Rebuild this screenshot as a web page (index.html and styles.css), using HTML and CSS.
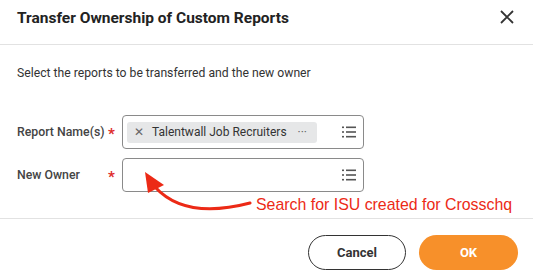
FILE: index.html
```html
<!DOCTYPE html>
<html lang="en">
<head>
    <meta charset="UTF-8">
    <title>Transfer Ownership of Custom Reports</title>
    <link rel="stylesheet" href="styles.css">
</head>
<body>
<div class="dialog">
    <div class="header">
        <h2>Transfer Ownership of Custom Reports</h2>
        <svg class="close" width="14" height="14" viewBox="0 0 14 14">
            <path d="M1 1 L13 13 M13 1 L1 13" stroke="#333" stroke-width="1.8" fill="none"/>
        </svg>
    </div>

    <div class="content">
        <p class="intro">Select the reports to be transferred and the new owner</p>

        <div class="row">
            <label class="lbl">Report Name(s)</label>
            <span class="req">*</span>
            <div class="field">
                <span class="chip">
                    <span class="chip-x">&#x2715;</span>
                    <span class="chip-text">Talentwall Job Recruiters</span>
                    <span class="chip-more">&middot;&middot;&middot;</span>
                </span>
                <svg class="list" width="14" height="12" viewBox="0 0 14 12">
                    <rect x="0" y="0.5" width="2" height="1.6" fill="#555"/>
                    <rect x="4" y="0.5" width="10" height="1.6" fill="#555"/>
                    <rect x="0" y="5.2" width="2" height="1.6" fill="#555"/>
                    <rect x="4" y="5.2" width="10" height="1.6" fill="#555"/>
                    <rect x="0" y="9.9" width="2" height="1.6" fill="#555"/>
                    <rect x="4" y="9.9" width="10" height="1.6" fill="#555"/>
                </svg>
            </div>
        </div>

        <div class="row">
            <label class="lbl">New Owner</label>
            <span class="req">*</span>
            <div class="field">
                <span class="spacer"></span>
                <svg class="list" width="14" height="12" viewBox="0 0 14 12">
                    <rect x="0" y="0.5" width="2" height="1.6" fill="#555"/>
                    <rect x="4" y="0.5" width="10" height="1.6" fill="#555"/>
                    <rect x="0" y="5.2" width="2" height="1.6" fill="#555"/>
                    <rect x="4" y="5.2" width="10" height="1.6" fill="#555"/>
                    <rect x="0" y="9.9" width="2" height="1.6" fill="#555"/>
                    <rect x="4" y="9.9" width="10" height="1.6" fill="#555"/>
                </svg>
            </div>
        </div>
    </div>

    <div class="footer">
        <button class="btn cancel">Cancel</button>
        <button class="btn ok">OK</button>
    </div>

    <!-- annotation drawn over the form -->
    <svg class="arrow" width="120" height="50" viewBox="140 168 120 50">
        <path d="M155 187 Q 185 220 250 203" stroke="#ec2a16" stroke-width="3" fill="none" stroke-linecap="round"/>
        <polygon points="145,172 164,185 148,193" fill="#ec2a16"/>
    </svg>
    <div class="note">Search for ISU created for Crosschq</div>
</div>
</body>
</html>
```

FILE: styles.css
```css
body {
    margin: 0;
    background: #fff;
    font-family: Roboto, "Liberation Sans", Arial, sans-serif;
    color: #333;
}
.dialog {
    position: relative;
    width: 533px;
    height: 275px;
    overflow: hidden;
}
.header {
    height: 45px;
    box-sizing: border-box;
    padding: 8px 19px 0 17px;
    display: flex;
    justify-content: space-between;
    align-items: flex-start;
    border-bottom: 1px solid #e2e2e2;
}
h2 {
    margin: 0;
    font-size: 15.5px;
    line-height: 20px;
    font-weight: 700;
    color: #222;
}
.close { margin-top: 2px; }

.content { padding: 0 17px; height: 173px; }
.intro {
    margin: 0;
    padding-top: 20px;
    font-size: 12.2px;
    line-height: 16px;
    color: #333;
}
.row {
    display: flex;
    align-items: center;
    margin-top: 9px;
}
.intro + .row { margin-top: 34px; }
.lbl {
    font-size: 12.3px;
    font-weight: 500;
    color: #444;
    width: 91px;
    white-space: nowrap;
}
.req {
    color: #de2b2b;
    font-size: 15px;
    font-weight: 700;
    width: 14px;
    padding-top: 4px;
}
.field {
    width: 242px;
    height: 34px;
    box-sizing: border-box;
    border: 1px solid #8a8a8a;
    border-radius: 4px;
    display: flex;
    align-items: center;
    justify-content: space-between;
    padding: 0 7px 0 4px;
}
.chip {
    display: flex;
    align-items: center;
    height: 21px;
    width: 190px;
    box-sizing: border-box;
    background: #e6e7e8;
    border-radius: 3px;
    padding: 0 8px 0 7px;
    font-size: 12px;
    color: #333;
}
.chip-x { font-size: 12px; color: #666; margin-right: 8px; }
.chip-text { flex: 1; }
.chip-more { color: #666; font-size: 12px; margin-right: 2px; }
.list { display: block; }

.footer {
    border-top: 1px solid #e2e2e2;
    display: flex;
    justify-content: flex-end;
    gap: 13px;
    padding: 16px 15px 0 0;
}
.btn {
    height: 35px;
    border-radius: 18px;
    font-family: Roboto, "Liberation Sans", Arial, sans-serif;
    font-size: 13px;
    font-weight: 700;
    cursor: pointer;
}
.cancel {
    width: 98px;
    background: #fff;
    border: 1px solid #333;
    color: #333;
}
.ok {
    width: 99px;
    background: #f7902a;
    border: none;
    color: #fff;
}

.arrow {
    position: absolute;
    left: 140px;
    top: 168px;
}
.note {
    position: absolute;
    left: 256px;
    top: 196px;
    font-family: "Liberation Sans", Arial, sans-serif;
    font-size: 15.9px;
    color: #ec2a16;
}
```
